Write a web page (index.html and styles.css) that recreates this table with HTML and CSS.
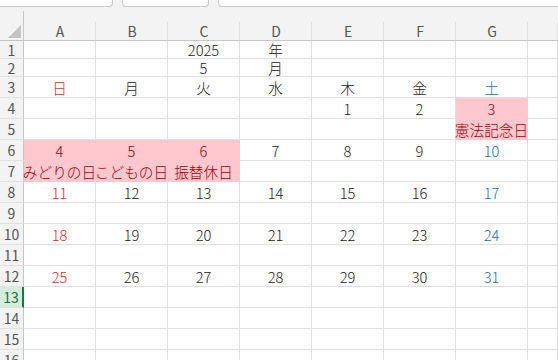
FILE: index.html
```html
<!DOCTYPE html>
<html lang="ja">
<head>
    <meta charset="UTF-8">
    <meta name="viewport" content="width=device-width, initial-scale=1.0">
    <title>カレンダー 2025年5月</title>
    <link rel="stylesheet" href="styles.css">
</head>
<body>
    <div class="toolbar">
        <div class="box name-box"></div>
        <div class="box fx-box"></div>
        <div class="box formula-box"></div>
    </div>

    <div class="sheet" id="sheet"></div>

    <script>
        const sheet = document.getElementById('sheet');
        const letters = ['A', 'B', 'C', 'D', 'E', 'F', 'G', 'H'];

        // 表のデータ (A〜G列)
        const rows = [
            ['', '', '2025', '年', '', '', ''],
            ['', '', '5', '月', '', '', ''],
            ['日', '月', '火', '水', '木', '金', '土'],
            ['', '', '', '', '1', '2', '3'],
            ['', '', '', '', '', '', '憲法記念日'],
            ['4', '5', '6', '7', '8', '9', '10'],
            ['みどりの日', 'こどもの日', '振替休日', '', '', '', ''],
            ['11', '12', '13', '14', '15', '16', '17'],
            [],
            ['18', '19', '20', '21', '22', '23', '24'],
            [],
            ['25', '26', '27', '28', '29', '30', '31'],
            [], [], [], []
        ];

        // 祝日のセル (行番号-列番号)
        const holidays = ['4-6', '5-6', '6-0', '6-1', '6-2', '7-0', '7-1', '7-2'];
        const activeRow = 13;

        // 列見出し
        const corner = document.createElement('div');
        corner.className = 'corner';
        corner.innerHTML = '<svg width="13" height="13" viewBox="0 0 13 13"><polygon points="13,0 13,13 0,13" fill="#c4c4c4"/></svg>';
        sheet.appendChild(corner);

        letters.forEach(letter => {
            const head = document.createElement('div');
            head.className = 'col-head';
            head.textContent = letter === 'H' ? '' : letter;
            sheet.appendChild(head);
        });

        rows.forEach((row, r) => {
            const num = r + 1;
            const rowHead = document.createElement('div');
            rowHead.className = 'row-head' + (num === activeRow ? ' active' : '');
            rowHead.textContent = num;
            sheet.appendChild(rowHead);

            for (let c = 0; c < 8; c++) {
                const cell = document.createElement('div');
                cell.className = 'cell';
                cell.textContent = row[c] || '';

                if (num >= 3 && c === 0) cell.classList.add('sun');
                if (num >= 3 && c === 6) cell.classList.add('sat');
                if (holidays.includes(num + '-' + c)) cell.classList.add('holiday');

                sheet.appendChild(cell);
            }
        });
    </script>
</body>
</html>
```

FILE: styles.css
```css
body {
    margin: 0;
    width: 558px;
    height: 360px;
    overflow: hidden;
    background: #fff;
    font-family: "Noto Sans CJK JP", "Noto Sans", sans-serif;
}

/* 数式バーの下端 */
.toolbar {
    display: flex;
    gap: 9px;
    height: 11px;
    background: #f3f3f3;
}
.box {
    height: 7px;
    box-sizing: border-box;
    background: #fff;
    border: 1px solid #c8c8c8;
    border-top: none;
    border-radius: 0 0 4px 4px;
}
.name-box {
    width: 117px;
    margin-left: -4px;
}
.fx-box {
    width: 87px;
}
.formula-box {
    flex: 1;
    margin-right: -6px;
}

/* シート */
.sheet {
    display: grid;
    grid-template-columns: 24px repeat(7, 72px) 1fr;
    grid-template-rows: 30px 18px 18px repeat(14, 21px);
}

.corner {
    background: #f3f3f3;
    border-right: 1px solid #c6c6c6;
    border-bottom: 1px solid #c6c6c6;
    display: flex;
    align-items: flex-end;
    justify-content: flex-end;
    padding: 0 2px 2px 0;
}
.corner svg {
    display: block;
}

.col-head {
    background: linear-gradient(#e0e0e0, #e0e0e0) right bottom / 1px 18px no-repeat, #f3f3f3;
    border-bottom: 1px solid #c6c6c6;
    color: #555;
    font-size: 14px;
    display: flex;
    align-items: flex-end;
    justify-content: center;
    line-height: 18px;
}

.row-head {
    background: #f3f3f3;
    border-right: 1px solid #c6c6c6;
    border-bottom: 1px solid #e0e0e0;
    color: #555;
    font-size: 14px;
    line-height: 16px;
    display: flex;
    align-items: center;
    justify-content: center;
    overflow: hidden;
}
.row-head.active {
    background: #d3ecdb;
    color: #1d7044;
    border-right: 2px solid #107c41;
}

.cell {
    border-right: 1px solid #e0e0e0;
    border-bottom: 1px solid #e0e0e0;
    font-size: 14.67px;
    font-weight: 300;
    line-height: 15px;
    color: #222;
    display: flex;
    align-items: center;
    justify-content: center;
    white-space: nowrap;
}
.cell.sun {
    color: #e0282e;
}
.cell.sat {
    color: #1f6fba;
}
.cell.holiday {
    background: #ffc7ce;
    border-color: #ffc7ce;
    color: #9c0006;
}
```
